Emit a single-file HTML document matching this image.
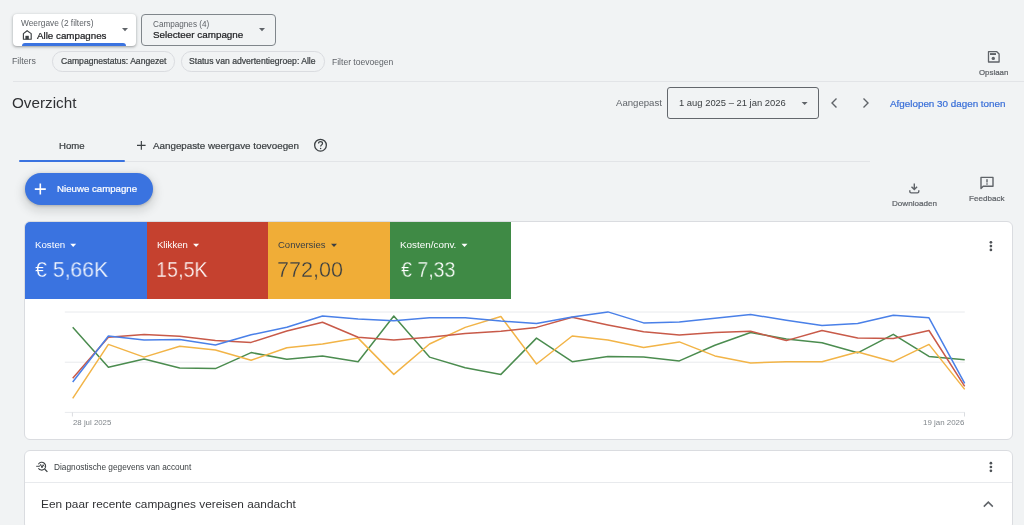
<!DOCTYPE html>
<html><head><meta charset="utf-8"><title>Overzicht</title>
<style>
html,body{margin:0;padding:0;}
body{width:1024px;height:525px;overflow:hidden;background:#f1f3f4;position:relative;font-family:"Liberation Sans", sans-serif;}
.t{position:absolute;white-space:nowrap;line-height:1;will-change:transform;}
.r{position:absolute;}
</style></head><body>
<div class="r" style="left:13.00px;top:14.00px;width:122.50px;height:31.70px;background:#fff;border-radius:4px;box-shadow:0 1px 2px rgba(60,64,67,.3),0 1px 3px 1px rgba(60,64,67,.15);overflow:hidden"></div>
<div class="r" style="left:22.00px;top:42.80px;width:104.00px;height:3.00px;background:#3a73e0;border-radius:3px 3px 0 0"></div>
<div class="t" style="left:20.50px;top:19.00px;font-size:8.33px;color:#5f6368;font-weight:400;">Weergave (2 filters)</div>
<div class="t" style="left:36.60px;top:31.00px;font-size:9.78px;color:#202124;font-weight:400;-webkit-text-stroke:0.22px #202124;">Alle campagnes</div>
<div class="r" style="left:141.30px;top:14.00px;width:134.50px;height:31.60px;border:1px solid #80868b;border-radius:4px;box-sizing:border-box"></div>
<div class="t" style="left:152.60px;top:21.00px;font-size:8.17px;color:#5f6368;font-weight:400;">Campagnes (4)</div>
<div class="t" style="left:152.60px;top:30.00px;font-size:9.86px;color:#202124;font-weight:400;-webkit-text-stroke:0.22px #202124;">Selecteer campagne</div>
<div class="t" style="left:12.10px;top:57.00px;font-size:8.80px;color:#5f6368;font-weight:400;">Filters</div>
<div class="r" style="left:52.30px;top:51.20px;width:122.40px;height:20.40px;border:1px solid #dadce0;border-radius:10.2px;box-sizing:border-box"></div>
<div class="t" style="left:60.80px;top:57.00px;font-size:8.59px;color:#3c4043;font-weight:400;-webkit-text-stroke:0.22px #3c4043;">Campagnestatus: Aangezet</div>
<div class="r" style="left:181.25px;top:51.20px;width:143.50px;height:20.40px;border:1px solid #dadce0;border-radius:10.2px;box-sizing:border-box"></div>
<div class="t" style="left:189.40px;top:57.00px;font-size:8.64px;color:#3c4043;font-weight:400;-webkit-text-stroke:0.22px #3c4043;">Status van advertentiegroep: Alle</div>
<div class="t" style="left:332.40px;top:58.00px;font-size:8.55px;color:#5f6368;font-weight:400;">Filter toevoegen</div>
<div class="t" style="left:978.70px;top:69.00px;font-size:7.87px;color:#5f6368;font-weight:400;-webkit-text-stroke:0.22px #5f6368;">Opslaan</div>
<div class="r" style="left:13.00px;top:81.00px;width:1011.00px;height:1.00px;background:#e2e4e7"></div>
<div class="t" style="left:11.80px;top:95.00px;font-size:15.25px;color:#303134;font-weight:400;">Overzicht</div>
<div class="t" style="left:615.60px;top:98.00px;font-size:9.60px;color:#5f6368;font-weight:400;">Aangepast</div>
<div class="r" style="left:667.30px;top:87.40px;width:151.50px;height:31.40px;border:1.2px solid #63676c;border-radius:3px;box-sizing:border-box"></div>
<div class="t" style="left:679.30px;top:98.00px;font-size:9.41px;color:#3c4043;font-weight:400;">1 aug 2025 – 21 jan 2026</div>
<div class="t" style="left:890.40px;top:99.00px;font-size:9.85px;color:#3a6fd8;font-weight:400;-webkit-text-stroke:0.22px #3a6fd8;">Afgelopen 30 dagen tonen</div>
<div class="t" style="left:59.20px;top:141.00px;font-size:9.60px;color:#3c4043;font-weight:400;-webkit-text-stroke:0.22px #3c4043;">Home</div>
<div class="t" style="left:152.90px;top:141.00px;font-size:9.81px;color:#3c4043;font-weight:400;-webkit-text-stroke:0.22px #3c4043;">Aangepaste weergave toevoegen</div>
<div class="r" style="left:19.00px;top:161.00px;width:851.00px;height:1.00px;background:#e2e4e7"></div>
<div class="r" style="left:19.00px;top:159.80px;width:105.80px;height:2.00px;background:#3a73e0;border-radius:1px"></div>
<div class="r" style="left:24.50px;top:173.00px;width:128.50px;height:31.50px;background:#3a73e0;border-radius:16px;box-shadow:0 1px 3px rgba(60,64,67,.3),0 4px 8px 3px rgba(60,64,67,.15)"></div>
<div class="t" style="left:56.70px;top:184.00px;font-size:9.68px;color:#fff;font-weight:400;-webkit-text-stroke:0.22px #fff;">Nieuwe campagne</div>
<div class="t" style="left:891.60px;top:200.00px;font-size:8.11px;color:#5f6368;font-weight:400;-webkit-text-stroke:0.22px #5f6368;">Downloaden</div>
<div class="t" style="left:968.90px;top:195.00px;font-size:8.08px;color:#5f6368;font-weight:400;-webkit-text-stroke:0.22px #5f6368;">Feedback</div>
<div class="r" style="left:24.00px;top:221.00px;width:989.00px;height:219.00px;background:#fff;border:1px solid #dadce0;border-radius:6px;box-sizing:border-box;overflow:hidden"></div>
<div class="r" style="left:25.00px;top:222.00px;width:121.80px;height:76.50px;background:#3a73e0;border-top-left-radius:5px;"></div>
<div class="t" style="left:34.60px;top:240.00px;font-size:9.70px;color:#fff;font-weight:400;">Kosten</div>
<div class="t" style="left:34.50px;top:260.00px;font-size:21.50px;color:#fff;font-weight:400;transform:scaleX(0.988);transform-origin:0 0;-webkit-text-stroke:0.35px #3a73e0;">€ 5,66K</div>
<div class="r" style="left:146.80px;top:222.00px;width:121.20px;height:76.50px;background:#c5412f;"></div>
<div class="t" style="left:157.10px;top:240.00px;font-size:9.55px;color:#fff;font-weight:400;">Klikken</div>
<div class="t" style="left:156.20px;top:260.00px;font-size:21.50px;color:#fff;font-weight:400;transform:scaleX(0.919);transform-origin:0 0;-webkit-text-stroke:0.35px #c5412f;">15,5K</div>
<div class="r" style="left:268.00px;top:222.00px;width:121.60px;height:76.50px;background:#f0ad37;"></div>
<div class="t" style="left:277.80px;top:240.00px;font-size:9.50px;color:#3c4043;font-weight:400;">Conversies</div>
<div class="t" style="left:276.90px;top:260.00px;font-size:21.50px;color:#3c4043;font-weight:400;transform:scaleX(1.005);transform-origin:0 0;-webkit-text-stroke:0.35px #f0ad37;">772,00</div>
<div class="r" style="left:389.60px;top:222.00px;width:121.60px;height:76.50px;background:#3f8a45;"></div>
<div class="t" style="left:399.90px;top:240.00px;font-size:9.90px;color:#fff;font-weight:400;">Kosten/conv.</div>
<div class="t" style="left:400.80px;top:260.00px;font-size:21.50px;color:#fff;font-weight:400;transform:scaleX(0.91);transform-origin:0 0;-webkit-text-stroke:0.35px #3f8a45;">€ 7,33</div>
<svg class="r" style="left:0;top:0" width="1024" height="525"><line x1="64.8" y1="312" x2="964.8" y2="312" stroke="#e8eaed" stroke-width="1"/><line x1="64.8" y1="362.2" x2="964.8" y2="362.2" stroke="#e8eaed" stroke-width="1"/><line x1="64.8" y1="412.4" x2="964.8" y2="412.4" stroke="#e8eaed" stroke-width="1"/><line x1="72.4" y1="412.4" x2="72.4" y2="416.5" stroke="#dadce0" stroke-width="1"/><line x1="964.5" y1="412.4" x2="964.5" y2="416.5" stroke="#dadce0" stroke-width="1"/><polyline points="72.7,327.2 108.4,367.3 144.1,358.9 179.7,368.0 215.4,368.6 251.1,352.6 286.8,359.2 322.5,355.9 358.1,361.7 393.8,316.0 429.5,357.1 465.2,367.8 500.9,374.4 536.5,338.1 572.2,361.7 607.9,356.6 643.6,357.1 679.3,360.9 714.9,345.2 750.6,332.5 786.3,338.9 822.0,342.7 857.7,352.8 893.3,334.3 929.0,356.4 964.7,359.7" fill="none" stroke="#4b8c4f" stroke-width="1.5" stroke-linejoin="round"/><polyline points="72.7,398.3 108.4,344.4 144.1,357.1 179.7,346.2 215.4,350.0 251.1,360.2 286.8,347.7 322.5,344.0 358.1,338.1 393.8,374.4 429.5,344.0 465.2,327.4 500.9,316.5 536.5,364.0 572.2,336.0 607.9,339.9 643.6,347.5 679.3,341.9 714.9,355.9 750.6,363.0 786.3,361.7 822.0,361.7 857.7,352.0 893.3,361.7 929.0,344.4 964.7,389.4" fill="none" stroke="#f2b447" stroke-width="1.5" stroke-linejoin="round"/><polyline points="72.7,378.2 108.4,337.3 144.1,334.5 179.7,336.3 215.4,340.6 251.1,342.4 286.8,331.0 322.5,322.3 358.1,337.3 393.8,339.9 429.5,337.3 465.2,333.5 500.9,331.2 536.5,327.4 572.2,317.3 607.9,324.9 643.6,331.7 679.3,335.0 714.9,332.5 750.6,331.2 786.3,340.6 822.0,330.5 857.7,338.1 893.3,338.6 929.0,330.5 964.7,386.3" fill="none" stroke="#c85a49" stroke-width="1.5" stroke-linejoin="round"/><polyline points="72.7,382.0 108.4,336.0 144.1,340.1 179.7,339.4 215.4,345.0 251.1,334.8 286.8,327.2 322.5,316.0 358.1,319.0 393.8,320.8 429.5,317.8 465.2,317.8 500.9,321.1 536.5,323.4 572.2,317.0 607.9,311.9 643.6,322.9 679.3,322.1 714.9,318.3 750.6,314.5 786.3,320.3 822.0,325.4 857.7,323.6 893.3,315.2 929.0,317.8 964.7,383.3" fill="none" stroke="#4a80e8" stroke-width="1.5" stroke-linejoin="round"/></svg>
<div class="t" style="left:72.90px;top:419.00px;font-size:7.83px;color:#80868b;font-weight:400;">28 jul 2025</div>
<div class="t" style="left:922.60px;top:419.00px;font-size:7.93px;color:#80868b;font-weight:400;">19 jan 2026</div>
<div class="r" style="left:24.00px;top:450.00px;width:989.00px;height:80.00px;background:#fff;border:1px solid #dadce0;border-radius:6px;box-sizing:border-box"></div>
<div class="r" style="left:25.00px;top:482.30px;width:987.00px;height:1.00px;background:#e8eaed"></div>
<div class="t" style="left:54.00px;top:463.00px;font-size:8.29px;color:#3c4043;font-weight:400;">Diagnostische gegevens van account</div>
<div class="t" style="left:41.40px;top:499.00px;font-size:11.82px;color:#303134;font-weight:400;">Een paar recente campagnes vereisen aandacht</div>
<svg class="r" style="left:0;top:0" width="1024" height="525"><path d="M23.4 39.2V33.6L27.1 30.7L31.2 33.6V39.2Z" fill="none" stroke="#3c4043" stroke-width="1.15" stroke-linejoin="round"/><rect x="25.4" y="35.8" width="3.4" height="3.6" fill="#3c4043"/><path d="M122 27.9H128L125 31.2Z" fill="#5f6368"/><path d="M259 28H265L262 31.3Z" fill="#5f6368"/><path d="M988.5 51.7H996.8L999.1 54V62H988.5Z" fill="none" stroke="#5f6368" stroke-width="1.3" stroke-linejoin="round"/><rect x="990" y="53.1" width="6" height="1.9" fill="#5f6368"/><circle cx="993.3" cy="58.4" r="1.7" fill="#5f6368"/><path d="M801.6 102H807.6L804.6 105Z" fill="#5f6368"/><path d="M836.5 98.5L832 103L836.5 107.5" fill="none" stroke="#5f6368" stroke-width="1.4"/><path d="M863.5 98.5L868 103L863.5 107.5" fill="none" stroke="#5f6368" stroke-width="1.4"/><path d="M141.35 141.1V149.7M137 145.4H145.6" stroke="#3c4043" stroke-width="1.15"/><circle cx="320.5" cy="145.2" r="5.85" fill="none" stroke="#3c4043" stroke-width="1.3"/><path d="M318.5 143.6C318.5 142.4 319.4 141.7 320.5 141.7C321.6 141.7 322.5 142.4 322.5 143.5C322.5 144.8 320.6 145 320.6 146.6" fill="none" stroke="#3c4043" stroke-width="1.2"/><circle cx="320.6" cy="148.4" r="0.75" fill="#3c4043"/><path d="M40.3 183.6V194.6M34.8 189.1H45.8" stroke="#fff" stroke-width="1.6"/><path d="M914.3 183.4V189.4M911.5 186.7L914.3 189.5L917.1 186.7" fill="none" stroke="#5f6368" stroke-width="1.4"/><path d="M909.8 190.3V191.5Q909.8 192.9 911.2 192.9H917.4Q918.8 192.9 918.8 191.5V190.3" fill="none" stroke="#5f6368" stroke-width="1.4"/><path d="M981 177.4H993V186.2H983.2L981 188.5Z" fill="none" stroke="#5f6368" stroke-width="1.4" stroke-linejoin="round"/><rect x="986.3" y="179.2" width="1.4" height="3.3" fill="#5f6368"/><rect x="986.3" y="183.3" width="1.4" height="1.4" fill="#5f6368"/><path d="M70.2 243.8H76.2L73.2 247Z" fill="#fff"/><path d="M193.1 243.8H199.1L196.1 247Z" fill="#fff"/><path d="M331.0 243.8H337.0L334.0 247Z" fill="#3c4043"/><path d="M461.5 243.8H467.5L464.5 247Z" fill="#fff"/><circle cx="990.9" cy="242.3" r="1.35" fill="#4f5357"/><circle cx="990.9" cy="246.1" r="1.35" fill="#4f5357"/><circle cx="990.9" cy="249.9" r="1.35" fill="#4f5357"/><path d="M38.4 464.2A3.9 3.9 0 1 1 38.4 468.2" fill="none" stroke="#3c4043" stroke-width="1.05"/><path d="M44.6 469L47.4 471.8" stroke="#3c4043" stroke-width="1.2"/><path d="M36.2 466.3H39.6L40.7 464.4L42 467.9L43.1 464.7L44.2 466.6" fill="none" stroke="#3c4043" stroke-width="0.95" stroke-linejoin="round"/><circle cx="990.9" cy="463.2" r="1.35" fill="#4f5357"/><circle cx="990.9" cy="467.0" r="1.35" fill="#4f5357"/><circle cx="990.9" cy="470.8" r="1.35" fill="#4f5357"/><path d="M983.8 506.6L988.3 502.1L992.8 506.6" fill="none" stroke="#5f6368" stroke-width="1.5"/></svg>
</body></html>
